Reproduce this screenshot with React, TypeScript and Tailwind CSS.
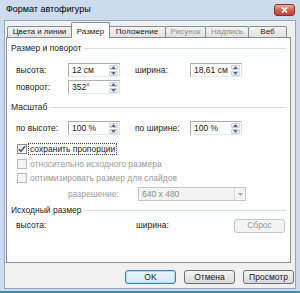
import React from "react";

const tabs = [
  { label: "Цвета и линии", w: "w-[65px]" },
  { label: "Размер", w: "w-[39px]", active: true },
  { label: "Положение", w: "w-[58px]" },
  { label: "Рисунок", w: "w-[41px]", disabled: true },
  { label: "Надпись", w: "w-[44px]", disabled: true },
  { label: "Веб", w: "w-[39px]" },
];

function Spin() {
  return (
    <div className="flex flex-col w-[11px] h-full p-[1px] gap-[1px]">
      <div className="flex-1 flex items-center justify-center rounded-[1px] border border-[#c9d3de] bg-gradient-to-b from-[#f6f8fb] to-[#dfe7f0]">
        <svg width="5" height="3" viewBox="0 0 5 3">
          <path d="M0 3 L2.5 0 L5 3 Z" fill="#56698c" />
        </svg>
      </div>
      <div className="flex-1 flex items-center justify-center rounded-[1px] border border-[#c9d3de] bg-gradient-to-b from-[#f6f8fb] to-[#dfe7f0]">
        <svg width="5" height="3" viewBox="0 0 5 3">
          <path d="M0 0 L2.5 3 L5 0 Z" fill="#56698c" />
        </svg>
      </div>
    </div>
  );
}

function Field({ value }: { value: string }) {
  return (
    <div className="flex items-center w-[52px] h-[14px] bg-white border border-[#abadb3] border-b-[#e3e9ef] border-r-[#dbdfe6]">
      <span className="flex-1 pl-[3px] leading-none whitespace-nowrap">{value}</span>
      <Spin />
    </div>
  );
}

function Header({ text, className }: { text: string; className: string }) {
  return (
    <div className={`flex items-center h-[11px] pl-[4px] pr-[4px] ${className}`}>
      <span>{text}</span>
      <div className="flex-1 h-px ml-[3px] bg-[#d5dfe5]" />
    </div>
  );
}

function Check({ checked, disabled }: { checked?: boolean; disabled?: boolean }) {
  return (
    <div
      className={`w-[10px] h-[10px] shrink-0 border flex items-center justify-center ${
        disabled
          ? "border-[#bcbcbc] bg-[#f4f4f4]"
          : "border-[#8e8f8f] bg-gradient-to-br from-[#e4e4e4] to-[#ffffff]"
      }`}
    >
      {checked && (
        <svg width="8" height="8" viewBox="0 0 8 8">
          <path d="M1 4.2 L3 6.3 L7 1.2" stroke="#3a5a9e" strokeWidth="1.6" fill="none" />
        </svg>
      )}
    </div>
  );
}

function Button({ label, focused, disabled }: { label: string; focused?: boolean; disabled?: boolean }) {
  let cls = "border-[#707070] bg-gradient-to-b from-[#f3f3f3] to-[#dadada] text-[#1b1b1b]";
  if (focused) cls = "border-[#3c7fb1] bg-gradient-to-b from-[#eaf6fd] to-[#d4ebf8] shadow-[inset_0_0_0_1px_#a9dcf5] text-[#1b1b1b]";
  if (disabled) cls = "border-[#c2c5c8] bg-[#f4f4f4] text-[#9a9a9a]";
  return (
    <div className={`flex items-center justify-center w-[51px] h-[14px] rounded-[3px] border ${cls}`}>
      {label}
    </div>
  );
}

export default function App() {
  return (
    <div className="w-[300px] h-[293px] flex flex-col bg-[#cddcec] border-b-2 border-[#3f8fa3] overflow-hidden font-['Liberation_Sans',Arial,sans-serif] text-[8.5px] text-[#1b1b1b] whitespace-nowrap">
      {/* Title bar */}
      <div className="h-[20px] flex items-center pl-[6px] pr-[5px]">
        <span className="text-[9px] text-black">Формат автофигуры</span>
        <div className="ml-auto w-[21px] h-[12px] rounded-[3px] border border-[#83322a] bg-gradient-to-b from-[#eab1a6] via-[#d45f4f] to-[#c24534] flex items-center justify-center">
          <svg width="7" height="6" viewBox="0 0 7 6">
            <path d="M1 0.5 L6 5.5 M6 0.5 L1 5.5" stroke="#ffffff" strokeWidth="1.6" />
          </svg>
        </div>
      </div>

      {/* Client */}
      <div className="mx-[4px] h-[269px] flex flex-col bg-[#f0f0f0] border border-[#93a8c0]">
        {/* Tabs */}
        <div className="flex items-end h-[16px] mt-[1px] ml-[2px] -mb-px relative z-10 text-[8px]">
          {tabs.map((t) =>
            t.active ? (
              <div
                key={t.label}
                className={`${t.w} h-[16px] -ml-px -mr-px flex items-start justify-center pt-[3px] bg-white border border-b-0 border-[#898c95] rounded-t-[2px] z-10`}
              >
                {t.label}
              </div>
            ) : (
              <div
                key={t.label}
                className={`${t.w} h-[12px] -ml-px first:ml-0 flex items-center justify-center bg-gradient-to-b from-[#f3f3f3] to-[#e2e2e2] border border-[#898c95] rounded-t-[2px] ${
                  t.disabled ? "text-[#8f8f8f]" : ""
                }`}
              >
                {t.label}
              </div>
            )
          )}
        </div>

        {/* Panel */}
        <div className="ml-[1px] w-[285px] h-[226px] flex flex-col bg-white border border-[#898c95]">
          <Header text="Размер и поворот" className="mt-[5px]" />

          <div className="flex items-center h-[14px] mt-[9px] pl-[9px]">
            <span className="w-[52px]">высота:</span>
            <Field value="12 см" />
            <span className="w-[55px] ml-[15px]">ширина:</span>
            <Field value="18,61 см" />
          </div>
          <div className="flex items-center h-[14px] mt-[3px] pl-[9px]">
            <span className="w-[52px]">поворот:</span>
            <Field value="352°" />
          </div>

          <Header text="Масштаб" className="mt-[8px]" />

          <div className="flex items-center h-[14px] mt-[8px] pl-[9px]">
            <span className="w-[52px]">по высоте:</span>
            <Field value="100 %" />
            <span className="w-[55px] ml-[15px]">по ширине:</span>
            <Field value="100 %" />
          </div>

          <div className="flex items-center h-[10px] mt-[9px] pl-[10px]">
            <Check checked />
            <span className="ml-[1px] px-[1px] h-[12px] flex items-center border border-dotted border-[#444]">
              сохранить пропорции
            </span>
          </div>
          <div className="flex items-center h-[10px] mt-[5px] pl-[10px] text-[#9a9a9a]">
            <Check disabled />
            <span className="ml-[3px]">относительно исходного размера</span>
          </div>
          <div className="flex items-center h-[10px] mt-[4px] pl-[10px] text-[#9a9a9a]">
            <Check disabled />
            <span className="ml-[3px]">оптимизировать размер для слайдов</span>
          </div>

          <div className="flex items-center h-[14px] mt-[4px] pl-[61px]">
            <span className="w-[70px] text-[#9a9a9a]">разрешение:</span>
            <div className="flex items-center w-[108px] h-[14px] border border-[#c3c6ca] bg-[#f4f4f4] text-[#8a8a8a]">
              <span className="flex-1 pl-[3px]">640 x 480</span>
              <div className="w-[11px] h-full flex items-center justify-center border-l border-[#d6d8db]">
                <svg width="5" height="3" viewBox="0 0 5 3">
                  <path d="M0 0 L2.5 3 L5 0 Z" fill="#a7a7a7" />
                </svg>
              </div>
            </div>
          </div>

          <Header text="Исходный размер" className="mt-[4px]" />

          <div className="flex items-center h-[13px] mt-[3px] pl-[9px] pr-[5px]">
            <span className="w-[120px]">высота:</span>
            <span>ширина:</span>
            <div className="ml-auto">
              <Button label="Сброс" disabled />
            </div>
          </div>
        </div>

        {/* Dialog buttons */}
        <div className="flex justify-end gap-[8px] mt-[7px] pr-[1px]">
          <Button label="OK" focused />
          <Button label="Отмена" />
          <Button label="Просмотр" />
        </div>
      </div>
    </div>
  );
}
